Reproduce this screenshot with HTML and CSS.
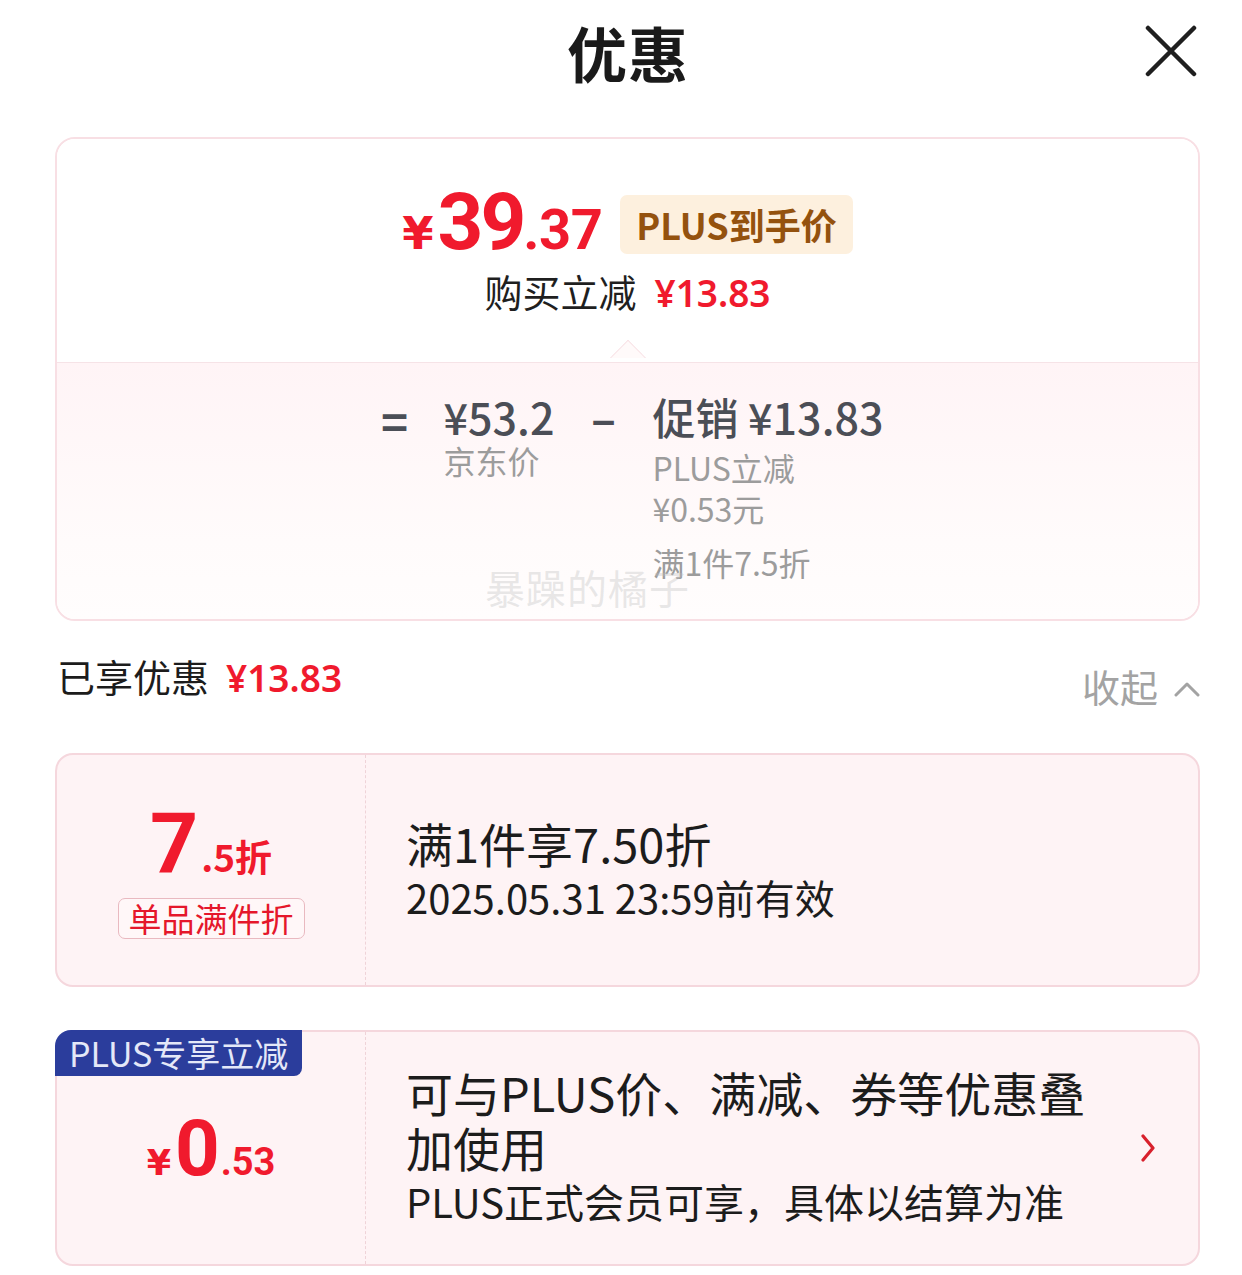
FILE: index.html
```html
<!DOCTYPE html>
<html lang="zh-CN">
<head>
<meta charset="utf-8">
<title>优惠</title>
<link rel="stylesheet" href="styles.css">
</head>
<body>
<div class="sheet">
  <header class="hdr">
    <span class="hdr-side"></span>
    <h1 class="title">优惠</h1>
    <button class="close" aria-label="关闭">
      <svg width="52" height="52" viewBox="0 0 52 52"><path d="M3 3 L49 49 M49 3 L3 49" stroke="#1f1f1f" stroke-width="4.5" stroke-linecap="round" fill="none"/></svg>
    </button>
  </header>

  <section class="summary">
    <div class="sum-top">
      <div class="price-row">
        <span class="price"><span class="p-yen">¥</span><span class="p-int">39</span><span class="p-dec">.37</span></span>
        <span class="plus-badge">PLUS到手价</span>
      </div>
      <div class="cut-row">购买立减<span class="cut-amt">¥13.83</span></div>
    </div>
    <div class="sum-bottom">
      <span class="notch"></span>
      <div class="formula">
        <span class="op op-eq">=</span>
        <div class="term">
          <div class="term-main">¥53.2</div>
          <div class="term-sub">京东价</div>
        </div>
        <span class="op op-minus">–</span>
        <div class="term term-promo">
          <div class="term-main">促销 ¥13.83</div>
          <div class="term-sub term-wrap">PLUS立减<br>¥0.53元</div>
          <div class="term-sub term-last">满1件7.5折</div>
        </div>
      </div>
      <div class="watermark">暴躁的橘子</div>
    </div>
  </section>

  <div class="enjoy-row">
    <div class="enjoy">已享优惠<span class="enjoy-amt">¥13.83</span></div>
    <div class="fold">收起
      <svg width="26" height="16" viewBox="0 0 26 16"><path d="M2 14 L13 3 L24 14" stroke="#a3a3a3" stroke-width="3" fill="none" stroke-linecap="round" stroke-linejoin="round"/></svg>
    </div>
  </div>

  <div class="coupon">
    <div class="c-left">
      <div class="disc"><span class="d-int">7</span><span class="d-dec">.5折</span></div>
      <span class="c-tag">单品满件折</span>
    </div>
    <div class="c-right">
      <div class="c-title">满1件享7.50折</div>
      <div class="c-desc">2025.05.31 23:59前有效</div>
    </div>
  </div>

  <div class="coupon coupon-plus">
    <span class="plus-flag">PLUS专享立减</span>
    <div class="c-left">
      <div class="amt"><span class="a-yen">¥</span><span class="a-int">0</span><span class="a-dec">.53</span></div>
    </div>
    <div class="c-right c-right-arrow">
      <div class="c-text">
        <div class="c-title">可与PLUS价、满减、券等优惠叠<br>加使用</div>
        <div class="c-desc">PLUS正式会员可享，具体以结算为准</div>
      </div>
      <svg class="c-arrow" width="16" height="28" viewBox="0 0 16 28"><path d="M3 2 L13 14 L3 26" stroke="#d8202c" stroke-width="3.2" fill="none" stroke-linecap="round" stroke-linejoin="round"/></svg>
    </div>
  </div>
</div>
</body>
</html>
```

FILE: styles.css
```css
* { box-sizing: border-box; }
html, body { margin: 0; padding: 0; background: #ffffff; }
body {
  font-family: "Noto Sans CJK SC", "Noto Sans", sans-serif;
  color: #1c1c1c;
  width: 1242px;
}
.sheet { padding: 0 42px 0 55px; }

/* header */
.hdr {
  display: grid;
  grid-template-columns: 1fr auto 1fr;
  align-items: center;
  height: 104px;
  margin: 0 -42px 0 -55px;
  padding: 0 45px 0 59px;
}
.title {
  margin: 0;
  font-size: 60px;
  font-weight: 700;
  line-height: 104px;
  color: #1a1a1a;
  letter-spacing: 1px;
}
.close {
  justify-self: end;
  border: 0;
  background: none;
  padding: 0;
  width: 52px;
  height: 52px;
  margin-top: -2px;
}
.close svg { display: block; }

/* summary card */
.summary {
  margin-top: 33px;
  border: 2px solid #f8dfe4;
  border-radius: 20px;
  overflow: hidden;
}
.sum-top {
  height: 223px;
  padding-top: 43px;
  background: #fff;
}
.price-row {
  display: flex;
  justify-content: center;
  align-items: center;
  height: 80px;
  gap: 18px;
}
.price {
  display: flex;
  align-items: baseline;
  font-family: Roboto, "Liberation Sans", sans-serif;
  font-weight: 700;
  color: #f01a2d;
  line-height: 1;
  white-space: nowrap;
}
.p-yen { font-family: "DejaVu Sans", sans-serif; font-size: 45px; margin-right: 4px; }
.p-int { font-size: 80px; letter-spacing: -3px; }
.p-dec { font-size: 56px; letter-spacing: -0.5px; }
.plus-badge {
  background: #fdf0de;
  color: #94520e;
  font-weight: 700;
  font-size: 36px;
  line-height: 59px;
  height: 59px;
  padding: 0 16px;
  border-radius: 7px;
  margin-top: 5px;
}
.cut-row {
  margin-top: 6px;
  text-align: center;
  font-size: 38px;
  line-height: 46px;
  color: #1f1f1f;
}
.cut-amt {
  margin-left: 18px;
  color: #f01a2d;
  font-family: "Noto Sans", Roboto, sans-serif;
  font-weight: 600;
  font-size: 37px;
}

.sum-bottom {
  position: relative;
  border-top: 1px solid #f6e3e7;
  background: linear-gradient(#fff4f6, #fffbfb 70%, #fffdfd);
  padding: 28px 0 36px;
  height: 257px;
}
.notch {
  position: absolute;
  left: 50%;
  top: -18px;
  width: 26px;
  height: 26px;
  margin-left: -13px;
  background: #fffafa;
  border-top: 1.5px solid #f7dde2;
  border-left: 1.5px solid #f7dde2;
  transform: rotate(45deg);
  clip-path: polygon(0 0, 100% 0, 0 100%);
}
.formula {
  display: flex;
  justify-content: center;
  align-items: flex-start;
  gap: 35px;
  padding-left: 6px;
}
.op {
  font-weight: 700;
  color: #4b4e56;
  font-size: 46px;
  line-height: 50px;
  width: 28px;
  text-align: center;
}
.op-eq { margin-top: 4px; }
.term-main {
  font-size: 43px;
  line-height: 50px;
  font-weight: 500;
  color: #4b4e56;
  white-space: nowrap;
}
.term-sub {
  font-size: 32px;
  line-height: 38px;
  color: #9c9c9c;
}
.term-promo { width: 228px; }
.term-wrap { margin-top: 6px; line-height: 41px; }
.term-last { margin-top: 13px; line-height: 41px; }
.watermark {
  position: absolute;
  left: 428px;
  top: 200px;
  font-size: 40px;
  line-height: 48px;
  color: rgba(190, 190, 190, 0.35);
  letter-spacing: 1px;
}

/* enjoyed row */
.enjoy-row {
  display: flex;
  justify-content: space-between;
  align-items: flex-start;
  margin-top: 30px;
  padding-left: 2px;
}
.enjoy {
  font-size: 38px;
  line-height: 50px;
  color: #1c1c1c;
}
.enjoy-amt {
  margin-left: 17px;
  color: #f01a2d;
  font-family: "Noto Sans", Roboto, sans-serif;
  font-weight: 600;
  font-size: 37px;
}
.fold {
  margin-top: 10px;
  display: flex;
  align-items: center;
  gap: 16px;
  font-size: 38px;
  line-height: 50px;
  color: #a3a3a3;
}
.fold svg { margin-top: 6px; }

/* coupons */
.coupon {
  position: relative;
  display: grid;
  grid-template-columns: 309px 1fr;
  margin-top: 42px;
  height: 234px;
  border: 2px solid #f5d7dd;
  border-radius: 18px;
  background: #fef3f5;
}
.coupon-plus { margin-top: 43px; height: 236px; }
.c-left {
  display: flex;
  flex-direction: column;
  align-items: center;
  justify-content: center;
  border-right: 1.5px dashed #efd3d8;
}
.disc {
  display: flex;
  align-items: baseline;
  font-family: Roboto, "Liberation Sans", sans-serif;
  font-weight: 700;
  color: #f01a2d;
  line-height: 1;
  white-space: nowrap;
}
.d-int { font-size: 84px; }
.d-dec { font-size: 37px; margin-left: 3px; font-family: "Noto Sans CJK SC", sans-serif; }
.c-tag {
  margin-top: 12px;
  font-size: 33px;
  line-height: 39px;
  padding: 0 10px;
  color: #e5172b;
  border: 1.5px solid #e9b9c0;
  border-radius: 7px;
  background: #fff7f8;
}
.c-right {
  display: flex;
  flex-direction: column;
  justify-content: center;
  padding-left: 40px;
}
.c-title {
  font-size: 47px;
  line-height: 55px;
  color: #1c1c1c;
}
.c-desc {
  font-size: 40px;
  line-height: 55px;
  color: #1c1c1c;
}
.c-right-arrow {
  flex-direction: row;
  align-items: center;
  justify-content: space-between;
  padding-right: 42px;
}
.c-text { margin-top: -4px; }

.plus-flag {
  position: absolute;
  left: -2px;
  top: -2px;
  background: #2b3d9c;
  color: #e4e8f8;
  font-size: 34px;
  line-height: 46px;
  height: 46px;
  padding: 0 14px;
  border-radius: 16px 0 8px 0;
}
.amt {
  display: flex;
  align-items: baseline;
  font-family: Roboto, "Liberation Sans", sans-serif;
  font-weight: 700;
  color: #f01a2d;
  line-height: 1;
  white-space: nowrap;
  margin-bottom: -2px;
}
.a-yen { font-family: "DejaVu Sans", sans-serif; font-size: 35px; }
.a-int { font-size: 78px; margin: 0 1px 0 4px; }
.a-dec { font-size: 38px; }
```
